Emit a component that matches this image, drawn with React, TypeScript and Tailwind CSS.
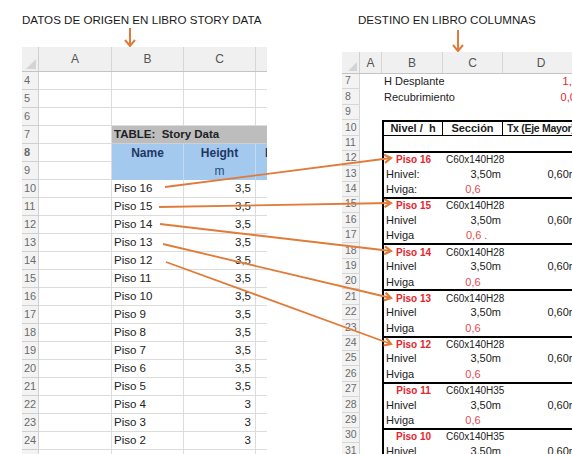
import React from 'react'

const ORANGE = '#e07b39'

type DownArrowProps = { x: number; y1: number; y2: number; w: number; h: number }

const DownArrow = ({ x, y1, y2, w, h }: DownArrowProps) => (
  <svg width={w} height={h} className="block">
    <line x1={x} y1={y1} x2={x} y2={y2 - 1} stroke={ORANGE} strokeWidth={2} />
    <path d={`M${x - 5},${y2 - 6} L${x},${y2} L${x + 5},${y2 - 6}`} fill="none" stroke={ORANGE} strokeWidth={2} />
  </svg>
)

const pisos = [
  ['Piso 16', '3,5'], ['Piso 15', '3,5'], ['Piso 14', '3,5'], ['Piso 13', '3,5'],
  ['Piso 12', '3,5'], ['Piso 11', '3,5'], ['Piso 10', '3,5'], ['Piso 9', '3,5'],
  ['Piso 8', '3,5'], ['Piso 7', '3,5'], ['Piso 6', '3,5'], ['Piso 5', '3,5'],
  ['Piso 4', '3'], ['Piso 3', '3'], ['Piso 2', '3'],
]

const RowNum = ({ n, w }: { n: number; w: string }) => (
  <div className={`${w} shrink-0 flex items-center pl-[2px] bg-[#f3f3f3] border-r border-b border-[#d0d0d0] text-[11px] text-[#6b6b6b]`}>
    {n}
  </div>
)

const LeftSheet = () => {
  return (
    <div className="w-[245px] overflow-hidden text-[11.5px] text-[#222]">
      {/* column header */}
      <div className="flex h-[25px] bg-[#f0f0f0] border-b border-[#c4c4c4] text-[12px] text-[#555]">
        <div className="w-[17px] shrink-0 relative border-r border-[#d0d0d0]">
          <svg width="10" height="10" className="absolute right-[2px] bottom-[2px]">
            <path d="M10,0 L10,10 L0,10 Z" fill="#d4d4d4" />
          </svg>
        </div>
        <div className="w-[73px] shrink-0 flex items-center justify-center border-r border-[#d6d6d6]">A</div>
        <div className="w-[72px] shrink-0 flex items-center justify-center border-r border-[#d6d6d6]">B</div>
        <div className="w-[72px] shrink-0 flex items-center justify-center border-r border-[#d6d6d6]">C</div>
        <div className="flex-1" />
      </div>

      {[4, 5, 6].map((n) => (
        <div key={n} className="flex h-[18px]">
          <RowNum n={n} w="w-[17px]" />
          <div className="w-[73px] shrink-0 border-r border-b border-[#dcdcdc]" />
          <div className="w-[72px] shrink-0 border-r border-b border-[#dcdcdc]" />
          <div className="w-[72px] shrink-0 border-r border-b border-[#dcdcdc]" />
          <div className="flex-1 border-b border-[#dcdcdc]" />
        </div>
      ))}

      <div className="flex h-[18px]">
        <RowNum n={7} w="w-[17px]" />
        <div className="w-[73px] shrink-0 border-r border-b border-[#dcdcdc]" />
        <div className="flex-1 flex items-center pl-[2px] bg-[#bdbdbd] font-bold whitespace-pre border-b border-[#d0d0d0]">
          TABLE:  Story Data
        </div>
      </div>

      <div className="flex h-[18px] font-bold text-[12px] text-[#1f3763]">
        <RowNum n={8} w="w-[17px]" />
        <div className="w-[73px] shrink-0 border-r border-b border-[#dcdcdc]" />
        <div className="w-[72px] shrink-0 flex items-center justify-center bg-[#a4c9ef] border-r border-[#c2dbf4]">Name</div>
        <div className="w-[72px] shrink-0 flex items-center justify-center bg-[#a4c9ef] border-r border-[#c2dbf4]">Height</div>
        <div className="flex-1 flex items-center pl-[9px] bg-[#a4c9ef] whitespace-nowrap overflow-hidden">Elevation</div>
      </div>

      <div className="flex h-[18px]">
        <RowNum n={9} w="w-[17px]" />
        <div className="w-[73px] shrink-0 border-r border-b border-[#dcdcdc]" />
        <div className="w-[72px] shrink-0 bg-[#a4c9ef] border-r border-[#c2dbf4]" />
        <div className="w-[72px] shrink-0 flex items-center justify-center bg-[#a4c9ef] border-r border-[#c2dbf4] text-[12px] text-[#1f4e79]">m</div>
        <div className="flex-1 bg-[#a4c9ef]" />
      </div>

      {pisos.map(([name, h], i) => (
        <div key={name} className="flex h-[18px]">
          <RowNum n={10 + i} w="w-[17px]" />
          <div className="w-[73px] shrink-0 border-r border-b border-[#dcdcdc]" />
          <div className="w-[72px] shrink-0 flex items-center pl-[2px] border-r border-b border-[#dcdcdc]">{name}</div>
          <div className="w-[72px] shrink-0 flex items-center justify-end pr-[4px] border-r border-b border-[#dcdcdc]">{h}</div>
          <div className="flex-1 border-b border-[#dcdcdc]" />
        </div>
      ))}

      <div className="flex h-[18px]">
        <RowNum n={25} w="w-[17px]" />
        <div className="w-[73px] shrink-0 border-r border-[#dcdcdc]" />
        <div className="w-[72px] shrink-0 border-r border-[#dcdcdc]" />
        <div className="w-[72px] shrink-0 border-r border-[#dcdcdc]" />
      </div>
    </div>
  )
}

type RRowProps = {
  n: number
  table?: boolean
  top?: boolean
  head?: boolean
  b?: React.ReactNode
  c?: React.ReactNode
  d?: React.ReactNode
  bAlign?: string
  cAlign?: string
  dAlign?: string
}

const RRow = ({ n, table, top, head, b, c, d, bAlign = 'justify-start pl-[2px]', cAlign = 'justify-start pl-[3px]', dAlign = 'justify-end pr-[2px]' }: RRowProps) => {
  const cells = (
    <>
      <div className={`${table ? 'w-[59px]' : 'w-[61px]'} shrink-0 flex items-center whitespace-pre ${bAlign} ${head ? 'border-r border-black' : ''}`}>{b}</div>
      <div className={`w-[60px] shrink-0 flex items-center whitespace-nowrap ${cAlign} ${head ? 'border-r border-black' : ''}`}>{c}</div>
      <div className={`w-[77px] shrink-0 flex items-center whitespace-nowrap ${dAlign}`}>{d}</div>
      <div className="flex-1" />
    </>
  )
  return (
    <div className="flex h-[15.4px]">
      <div className="w-[18px] shrink-0 flex items-center pl-[3px] bg-[#f3f3f3] border-r border-b border-[#d6d6d6] text-[10.5px] text-[#6b6b6b]">
        {n}
      </div>
      <div className="w-[22px] shrink-0" />
      {table ? (
        <div className={`flex-1 flex border-l-2 border-black ${top ? 'border-t-2' : ''} ${head ? 'border-t-2 border-b' : ''}`}>{cells}</div>
      ) : (
        <div className="flex-1 flex">{cells}</div>
      )}
    </div>
  )
}

const red = 'text-[#e3262f]'

const blocks = [
  { piso: 'Piso 16', sec: 'C60x140H28', colon: true, dot: false },
  { piso: 'Piso 15', sec: 'C60x140H28', colon: false, dot: true },
  { piso: 'Piso 14', sec: 'C60x140H28', colon: false, dot: false },
  { piso: 'Piso 13', sec: 'C60x140H28', colon: false, dot: false },
  { piso: 'Piso 12', sec: 'C60x140H28', colon: false, dot: false },
  { piso: 'Piso 11', sec: 'C60x140H35', colon: false, dot: false },
  { piso: 'Piso 10', sec: 'C60x140H35', colon: false, dot: false },
]

const RightSheet = () => {
  return (
    <div className="w-[240px] text-[11px] text-[#222]">
      <div className="flex h-[22px] bg-[#f0f0f0] border-b border-[#c4c4c4] text-[12px] text-[#555]">
        <div className="w-[18px] shrink-0 relative border-r border-[#d0d0d0]">
          <svg width="9" height="9" className="absolute right-[2px] bottom-[2px]">
            <path d="M9,0 L9,9 L0,9 Z" fill="#d4d4d4" />
          </svg>
        </div>
        <div className="w-[22px] shrink-0 flex items-center justify-center border-r border-[#d6d6d6]">A</div>
        <div className="w-[61px] shrink-0 flex items-center justify-center border-r border-[#d6d6d6]">B</div>
        <div className="w-[60px] shrink-0 flex items-center justify-center border-r border-[#d6d6d6]">C</div>
        <div className="w-[77px] shrink-0 flex items-center justify-center border-r border-[#d6d6d6]">D</div>
        <div className="flex-1" />
      </div>

      <RRow n={7} b="H Desplante" d={<span className={`${red} mr-[-6px]`}>1,50</span>} />
      <RRow n={8} b="Recubrimiento" d={<span className={`${red} mr-[-4px]`}>0,04</span>} />
      <RRow n={9} />
      <RRow
        n={10}
        table
        head
        bAlign="justify-center"
        cAlign="justify-center"
        dAlign="justify-start pl-[4px]"
        b={<span className="font-bold">Nivel /  h</span>}
        c={<span className="font-bold">Sección</span>}
        d={<span className="font-bold text-[10.5px] tracking-[-0.3px]">Tx (Eje Mayor)</span>}
      />
      <RRow n={11} table />
      {blocks.map((bl, i) => {
        const n = 12 + i * 3
        return (
          <React.Fragment key={bl.piso}>
            <RRow
              n={n}
              table
              top
              bAlign="justify-center"
              b={<span className={`font-bold text-[10px] ${red}`}>{bl.piso}</span>}
              c={<span className="text-[10px]">{bl.sec}</span>}
            />
            <RRow
              n={n + 1}
              table
              b={bl.colon ? 'Hnivel:' : 'Hnivel'}
              c="3,50m"
              cAlign="justify-end pr-[2px]"
              d="0,60m"
            />
            {n + 2 < 32 && (
              <RRow
                n={n + 2}
                table
                b={bl.colon ? 'Hviga:' : 'Hviga'}
                c={<span className="text-[#e5484f]">{bl.dot ? '0,6 .' : '0,6'}</span>}
                cAlign={bl.dot ? 'justify-start pl-[23px]' : 'justify-center'}
              />
            )}
          </React.Fragment>
        )
      })}
    </div>
  )
}

const links = [
  [165, 187, 391, 158],
  [159, 207, 391, 203],
  [160, 224, 391, 251],
  [163, 244, 391, 298],
  [166, 262, 391, 344],
]

export default function App() {
  return (
    <div className="relative w-[572px] h-[454px] overflow-hidden bg-white font-['Liberation_Sans',Arial,sans-serif]">
      <div className="flex pt-[13px]">
        <div className="ml-[22px] w-[245px] shrink-0">
          <div className="h-[14px] leading-[14px] text-[11.6px] text-[#1a1a1a] whitespace-nowrap">
            DATOS DE ORIGEN EN LIBRO STORY DATA
          </div>
          <DownArrow x={108} y1={1} y2={19} w={245} h={20} />
          <LeftSheet />
        </div>
        <div className="ml-[75px] w-[240px] shrink-0">
          <div className="h-[14px] leading-[14px] pl-[16px] text-[11.6px] text-[#1a1a1a] whitespace-nowrap">
            DESTINO EN LIBRO COLUMNAS
          </div>
          <DownArrow x={116} y1={3} y2={24} w={240} h={25} />
          <RightSheet />
        </div>
      </div>

      <svg className="absolute inset-0 pointer-events-none" width={572} height={454}>
        <defs>
          <marker id="head" markerWidth="10" markerHeight="10" refX="8" refY="5" orient="auto" markerUnits="userSpaceOnUse">
            <path d="M1.5,1 L8,5 L1.5,9" fill="none" stroke={ORANGE} strokeWidth={2.2} />
          </marker>
        </defs>
        {links.map(([x1, y1, x2, y2], i) => (
          <line key={i} x1={x1} y1={y1} x2={x2} y2={y2} stroke={ORANGE} strokeWidth={1.8} markerEnd="url(#head)" />
        ))}
      </svg>
    </div>
  )
}
